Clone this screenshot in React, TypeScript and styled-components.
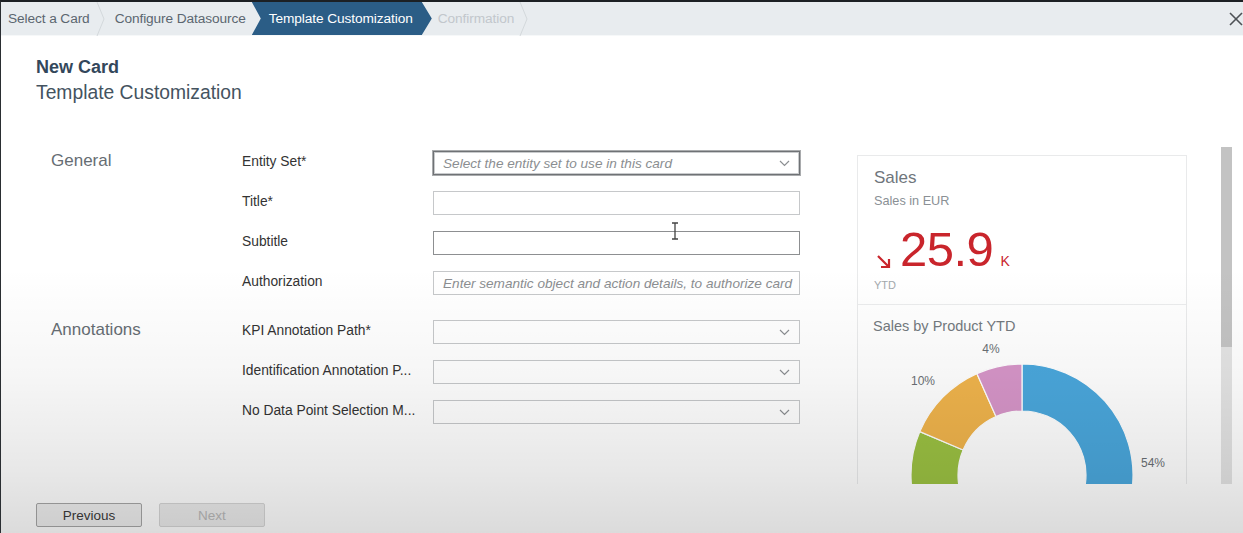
import React from "react";
import styled, { createGlobalStyle } from "styled-components";

const Global = createGlobalStyle`
  html, body { margin: 0; padding: 0; background: #ffffff; }
  body { font-family: "Liberation Sans", Arial, sans-serif; }
  * { box-sizing: border-box; }
`;

const Frame = styled.div`
  position: relative;
  width: 1243px;
  height: 533px;
  overflow: hidden;
  background: #ffffff;
  border-top: 2px solid #1c2024;
  border-left: 1px solid #2a2e32;
  display: flex;
  flex-direction: column;
`;

const Vignette = styled.div`
  position: absolute;
  inset: 0;
  pointer-events: none;
  background: linear-gradient(
    to bottom,
    rgba(0, 0, 0, 0) 0%,
    rgba(0, 0, 0, 0) 50%,
    rgba(0, 0, 0, 0.035) 70%,
    rgba(0, 0, 0, 0.09) 88%,
    rgba(0, 0, 0, 0.14) 100%
  );
`;

const Header = styled.div`
  height: 34px;
  flex: none;
  display: flex;
  align-items: stretch;
  background: #e8ecef;
  border-bottom: 1px solid #f6f8f9;
`;

const Step = styled.div<{ $state: "done" | "active" | "todo" }>`
  display: flex;
  align-items: center;
  font-size: 13.7px;
  letter-spacing: -0.1px;
  white-space: nowrap;
  padding-bottom: 1px;
  color: ${(p) => (p.$state === "todo" ? "#c2c7cc" : p.$state === "active" ? "#ffffff" : "#5b6670")};
  ${(p) =>
    p.$state === "active"
      ? `
    background: #2b5d86;
    padding: 0 18px 1px 17px;
    width: 180px;
    clip-path: polygon(0 0, calc(100% - 10px) 0, 100% 50%, calc(100% - 10px) 100%, 0 100%, 9px 50%);
  `
      : ""}
`;

const SepSvg = styled.svg`
  width: 9px;
  height: 34px;
  flex: none;
`;

const Sep: React.FC<{ $ml: number; $mr: number }> = ({ $ml, $mr }) => (
  <SepSvg viewBox="0 0 9 34" style={{ marginLeft: $ml, marginRight: $mr }}>
    <polyline points="1,0 8,17 1,34" fill="none" stroke="#d3d8dc" strokeWidth="1" />
  </SepSvg>
);

const Spacer = styled.div`
  flex: 1;
`;

const CloseBtn = styled.div`
  width: 20px;
  display: flex;
  align-items: center;
  justify-content: flex-end;
`;

const TitleBlock = styled.div`
  padding: 20px 0 0 35px;
  flex: none;
`;

const CardName = styled.div`
  font-size: 18px;
  line-height: 22px;
  font-weight: bold;
  color: #33475b;
`;

const PageTitle = styled.div`
  margin-top: 3px;
  font-size: 19.3px;
  line-height: 24px;
  color: #44535f;
`;

const Content = styled.div`
  margin-top: 42px;
  height: 337px;
  flex: none;
  overflow: hidden;
  display: flex;
  align-items: flex-start;
  padding-left: 50px;
`;

const Form = styled.div`
  width: 749px;
  padding-top: 4px;
  display: flex;
  flex-direction: column;
  gap: 25px;
`;

const Section = styled.div`
  display: grid;
  grid-template-columns: 191px 1fr;
`;

const SectionTitle = styled.div`
  font-size: 17px;
  line-height: 20px;
  color: #666d73;
`;

const Fields = styled.div`
  display: grid;
  grid-template-columns: 191px 367px;
  row-gap: 16px;
  align-items: center;
`;

const Label = styled.div`
  font-size: 13.8px;
  line-height: 16px;
  color: #333333;
  white-space: nowrap;
  margin-top: -2px;
`;

const Input = styled.div<{ $strong?: "focus" | "dark" }>`
  position: relative;
  height: 24px;
  background: #ffffff;
  border: 1px solid
    ${(p) => (p.$strong === "focus" ? "#6f7275" : p.$strong === "dark" ? "#8d8f91" : "#c6c8ca")};
  ${(p) => (p.$strong === "focus" ? "box-shadow: inset 0 0 0 1px #c9cbcd, 0 0 0 1px #a9abad;" : "")}
  display: flex;
  align-items: center;
  padding: 0 9px;
  font-size: 13.6px;
  font-style: italic;
  color: #8b8e91;
  white-space: nowrap;
  overflow: hidden;
`;

const Caret = styled.svg`
  position: absolute;
  right: 9px;
  top: 8px;
  width: 11px;
  height: 7px;
`;

const Chevron = () => (
  <Caret viewBox="0 0 11 7">
    <polyline points="1,1 5.5,5.5 10,1" fill="none" stroke="#8c8f92" strokeWidth="1.2" />
  </Caret>
);

const CursorSvg = styled.svg`
  position: absolute;
  left: 236px;
  top: -10px;
  width: 10px;
  height: 18px;
`;

const Preview = styled.div`
  margin-left: 57px;
  margin-top: 8px;
  width: 330px;
  height: 400px;
  flex: none;
  background: #ffffff;
  border: 1px solid #e9eaeb;
  display: flex;
  flex-direction: column;
  overflow: hidden;
`;

const KpiArea = styled.div`
  flex: none;
  padding: 12px 16px 0 16px;
  height: 149px;
  border-bottom: 1px solid #ebeced;
`;

const CardTitle = styled.div`
  font-size: 17px;
  line-height: 20px;
  color: #6f767c;
`;

const CardSub = styled.div`
  margin-top: 6px;
  font-size: 12.7px;
  line-height: 14px;
  color: #8a9095;
`;

const KpiRow = styled.div`
  margin-top: 15px;
  display: flex;
  align-items: flex-end;
  color: #c9252c;
  height: 48px;
`;

const KpiValue = styled.div`
  font-size: 49px;
  line-height: 44px;
  letter-spacing: -0.5px;
  margin-left: 9px;
`;

const KpiUnit = styled.div`
  font-size: 14px;
  line-height: 14px;
  margin-left: 7px;
  margin-bottom: 3px;
`;

const KpiArrow = styled.svg`
  width: 15px;
  height: 15px;
  margin-bottom: 2px;
  margin-left: 2px;
`;

const KpiFoot = styled.div`
  margin-top: 8px;
  font-size: 11px;
  color: #a3a8ac;
`;

const ChartArea = styled.div`
  flex: none;
  padding: 13px 0 0 0;
`;

const ChartTitle = styled.div`
  padding-left: 15px;
  font-size: 14.5px;
  line-height: 16px;
  color: #73797e;
`;

const ChartSvg = styled.svg`
  display: block;
  margin-top: 5px;
  width: 328px;
  height: 200px;
`;

const ScrollTrack = styled.div`
  margin-left: 34px;
  width: 11px;
  height: 337px;
  flex: none;
  background: #e3e3e3;
  display: flex;
  flex-direction: column;
`;

const ScrollThumb = styled.div`
  height: 200px;
  background: #c3c3c3;
`;

const Footer = styled.div`
  flex: 1;
  display: flex;
  align-items: flex-start;
  gap: 17px;
  padding: 19px 0 0 35px;
`;

const Button = styled.div<{ $disabled?: boolean }>`
  width: 106px;
  height: 24px;
  display: flex;
  align-items: center;
  justify-content: center;
  border-radius: 2px;
  font-size: 13.5px;
  background: ${(p) => (p.$disabled ? "#ececec" : "#efefef")};
  border: 1px solid ${(p) => (p.$disabled ? "#d6d6d6" : "#a7a7a7")};
  color: ${(p) => (p.$disabled ? "#b9b9b9" : "#3a3a3a")};
`;

const CX = 164;
const CY = 136;
const RO = 111;
const RI = 64;

function pt(r: number, deg: number) {
  const a = (deg * Math.PI) / 180;
  return [CX + r * Math.sin(a), CY - r * Math.cos(a)];
}

function arc(a0: number, a1: number) {
  const [x0, y0] = pt(RO, a0);
  const [x1, y1] = pt(RO, a1);
  const [x2, y2] = pt(RI, a1);
  const [x3, y3] = pt(RI, a0);
  const large = a1 - a0 > 180 ? 1 : 0;
  return `M${x0},${y0} A${RO},${RO} 0 ${large} 1 ${x1},${y1} L${x2},${y2} A${RI},${RI} 0 ${large} 0 ${x3},${y3} Z`;
}

const segments = [
  { a0: 0, a1: 194, color: "#4aa7dc" },
  { a0: 194, a1: 240, color: "#9bc142" },
  { a0: 240, a1: 293, color: "#9bc142" },
  { a0: 293, a1: 336, color: "#f0b44c" },
  { a0: 336, a1: 360, color: "#d695c8" },
];

const LabelText: React.FC<{ x: number; y: number; children: React.ReactNode }> = ({ x, y, children }) => (
  <text x={x} y={y} fontSize="12" fill="#6a6f74" textAnchor="middle" fontFamily="Liberation Sans, Arial, sans-serif">
    {children}
  </text>
);

export default function App() {
  return (
    <>
      <Global />
      <Frame>
        <Header>
          <Step $state="done" style={{ paddingLeft: 7 }}>Select a Card</Step>
          <Sep $ml={6} $mr={10} />
          <Step $state="done">Configure Datasource</Step>
          <Spacer style={{ flex: "none", width: 6 }} />
          <Step $state="active">Template Customization</Step>
          <Step $state="todo" style={{ marginLeft: 6 }}>Confirmation</Step>
          <Sep $ml={5} $mr={0} />
          <Spacer />
          <CloseBtn>
            <svg width="14" height="14" viewBox="0 0 14 14">
              <line x1="1" y1="1" x2="13" y2="13" stroke="#4d5155" strokeWidth="1.6" />
              <line x1="13" y1="1" x2="1" y2="13" stroke="#4d5155" strokeWidth="1.6" />
            </svg>
          </CloseBtn>
        </Header>

        <TitleBlock>
          <CardName>New Card</CardName>
          <PageTitle>Template Customization</PageTitle>
        </TitleBlock>

        <Content>
          <Form>
            <Section>
              <SectionTitle>General</SectionTitle>
              <Fields>
                <Label>Entity Set*</Label>
                <Input $strong="focus">
                  Select the entity set to use in this card
                  <Chevron />
                </Input>
                <Label>Title*</Label>
                <Input />
                <Label>Subtitle</Label>
                <Input $strong="dark" style={{ overflow: "visible" }}>
                  <CursorSvg viewBox="0 0 10 18">
                    <path d="M2,1 H8 M5,1 V17 M2,17 H8" fill="none" stroke="#444" strokeWidth="1.3" />
                  </CursorSvg>
                </Input>
                <Label>Authorization</Label>
                <Input>Enter semantic object and action details, to authorize card</Input>
              </Fields>
            </Section>
            <Section>
              <SectionTitle>Annotations</SectionTitle>
              <Fields>
                <Label>KPI Annotation Path*</Label>
                <Input>
                  <Chevron />
                </Input>
                <Label>Identification Annotation P...</Label>
                <Input>
                  <Chevron />
                </Input>
                <Label>No Data Point Selection M...</Label>
                <Input>
                  <Chevron />
                </Input>
              </Fields>
            </Section>
          </Form>

          <Preview>
            <KpiArea>
              <CardTitle>Sales</CardTitle>
              <CardSub>Sales in EUR</CardSub>
              <KpiRow>
                <KpiArrow viewBox="0 0 15 15">
                  <line x1="2" y1="2" x2="12.5" y2="12.5" stroke="#c9252c" strokeWidth="2.2" />
                  <polyline points="5,13 13,13 13,5" fill="none" stroke="#c9252c" strokeWidth="2.2" />
                </KpiArrow>
                <KpiValue>25.9</KpiValue>
                <KpiUnit>K</KpiUnit>
              </KpiRow>
              <KpiFoot>YTD</KpiFoot>
            </KpiArea>
            <ChartArea>
              <ChartTitle>Sales by Product YTD</ChartTitle>
              <ChartSvg viewBox="0 0 328 200">
                {segments.map((s, i) => (
                  <path key={i} d={arc(s.a0, s.a1)} fill={s.color} stroke="#ffffff" strokeWidth="1.2" />
                ))}
                <LabelText x={133} y={14}>4%</LabelText>
                <LabelText x={65} y={46}>10%</LabelText>
                <LabelText x={295} y={128}>54%</LabelText>
              </ChartSvg>
            </ChartArea>
          </Preview>

          <ScrollTrack>
            <ScrollThumb />
          </ScrollTrack>
        </Content>

        <Footer>
          <Button>Previous</Button>
          <Button $disabled>Next</Button>
        </Footer>
        <Vignette />
      </Frame>
    </>
  );
}
